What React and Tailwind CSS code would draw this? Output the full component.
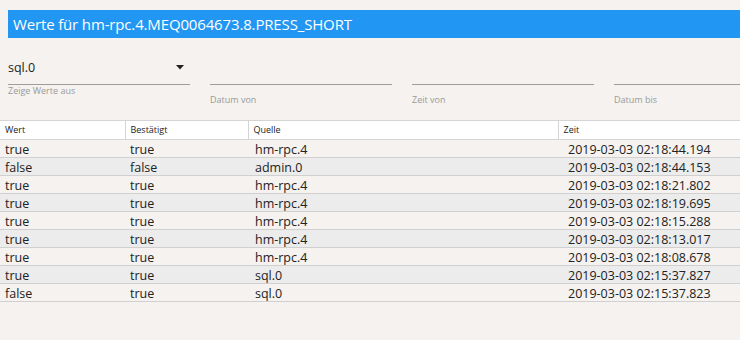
import React from "react";

const rows = [
  ["true", "true", "hm-rpc.4", "2019-03-03 02:18:44.194"],
  ["false", "false", "admin.0", "2019-03-03 02:18:44.153"],
  ["true", "true", "hm-rpc.4", "2019-03-03 02:18:21.802"],
  ["true", "true", "hm-rpc.4", "2019-03-03 02:18:19.695"],
  ["true", "true", "hm-rpc.4", "2019-03-03 02:18:15.288"],
  ["true", "true", "hm-rpc.4", "2019-03-03 02:18:13.017"],
  ["true", "true", "hm-rpc.4", "2019-03-03 02:18:08.678"],
  ["true", "true", "sql.0", "2019-03-03 02:15:37.827"],
  ["false", "true", "sql.0", "2019-03-03 02:15:37.823"],
];

const Field = ({ label, children, labelClass = "mt-[10px]" }) => (
  <div className="w-[182px] shrink-0">
    <div className="h-[35px] flex items-center justify-between border-b border-[#9e9e9e]">
      {children}
    </div>
    <div className={"text-[9px] text-[#9a9a9a] leading-none " + labelClass}>
      {label}
    </div>
  </div>
);

const App = () => {
  return (
    <div
      className="w-[740px] h-[340px] overflow-hidden bg-[#f5f2ef] text-[#222]"
      style={{ fontFamily: '"Open Sans", "Noto Sans", sans-serif' }}
    >
      <div className="pt-[10px] pl-[8px]">
        <div className="h-[28px] bg-[#2196f3] text-white text-[15px] flex items-center pl-[5px] tracking-[-0.15px]">
          Werte für hm-rpc.4.MEQ0064673.8.PRESS_SHORT
        </div>
      </div>

      <div className="flex gap-[20px] pl-[8px] mt-[12px]">
        <Field label="Zeige Werte aus" labelClass="mt-[1px]">
          <span className="text-[12.5px] pt-[2px]">sql.0</span>
          <svg width="8" height="5" viewBox="0 0 8 5" className="mr-[6px]">
            <path d="M0 0 L8 0 L4 4.5 Z" fill="#222" />
          </svg>
        </Field>
        <Field label="Datum von" />
        <Field label="Zeit von" />
        <Field label="Datum bis" />
      </div>

      <table className="mt-[16px] w-full border-collapse text-left">
        <thead>
          <tr className="bg-white text-[9px] h-[19px]">
            <th className="w-[125px] font-normal border border-l-0 border-[#d4d4d4] pl-[5px]">Wert</th>
            <th className="w-[123px] font-normal border border-[#d4d4d4] pl-[5px]">Bestätigt</th>
            <th className="w-[310px] font-normal border border-[#d4d4d4] pl-[5px]">Quelle</th>
            <th className="font-normal border border-r-0 border-[#d4d4d4] pl-[5px]">Zeit</th>
          </tr>
        </thead>
        <tbody className="text-[12.5px]">
          {rows.map((r, i) => (
            <tr
              key={i}
              className={
                "h-[18px] border-b border-[#d0d0d0] " +
                (i % 2 === 0 ? "bg-[#f5f2ef]" : "bg-[#ececec]")
              }
            >
              <td className="pl-[5px] pt-[3px] leading-none">{r[0]}</td>
              <td className="pl-[5px] pt-[3px] leading-none">{r[1]}</td>
              <td className="pl-[7px] pt-[3px] leading-none">{r[2]}</td>
              <td className="pl-[10px] pt-[3px] leading-none">{r[3]}</td>
            </tr>
          ))}
        </tbody>
      </table>
    </div>
  );
};

export default App;
